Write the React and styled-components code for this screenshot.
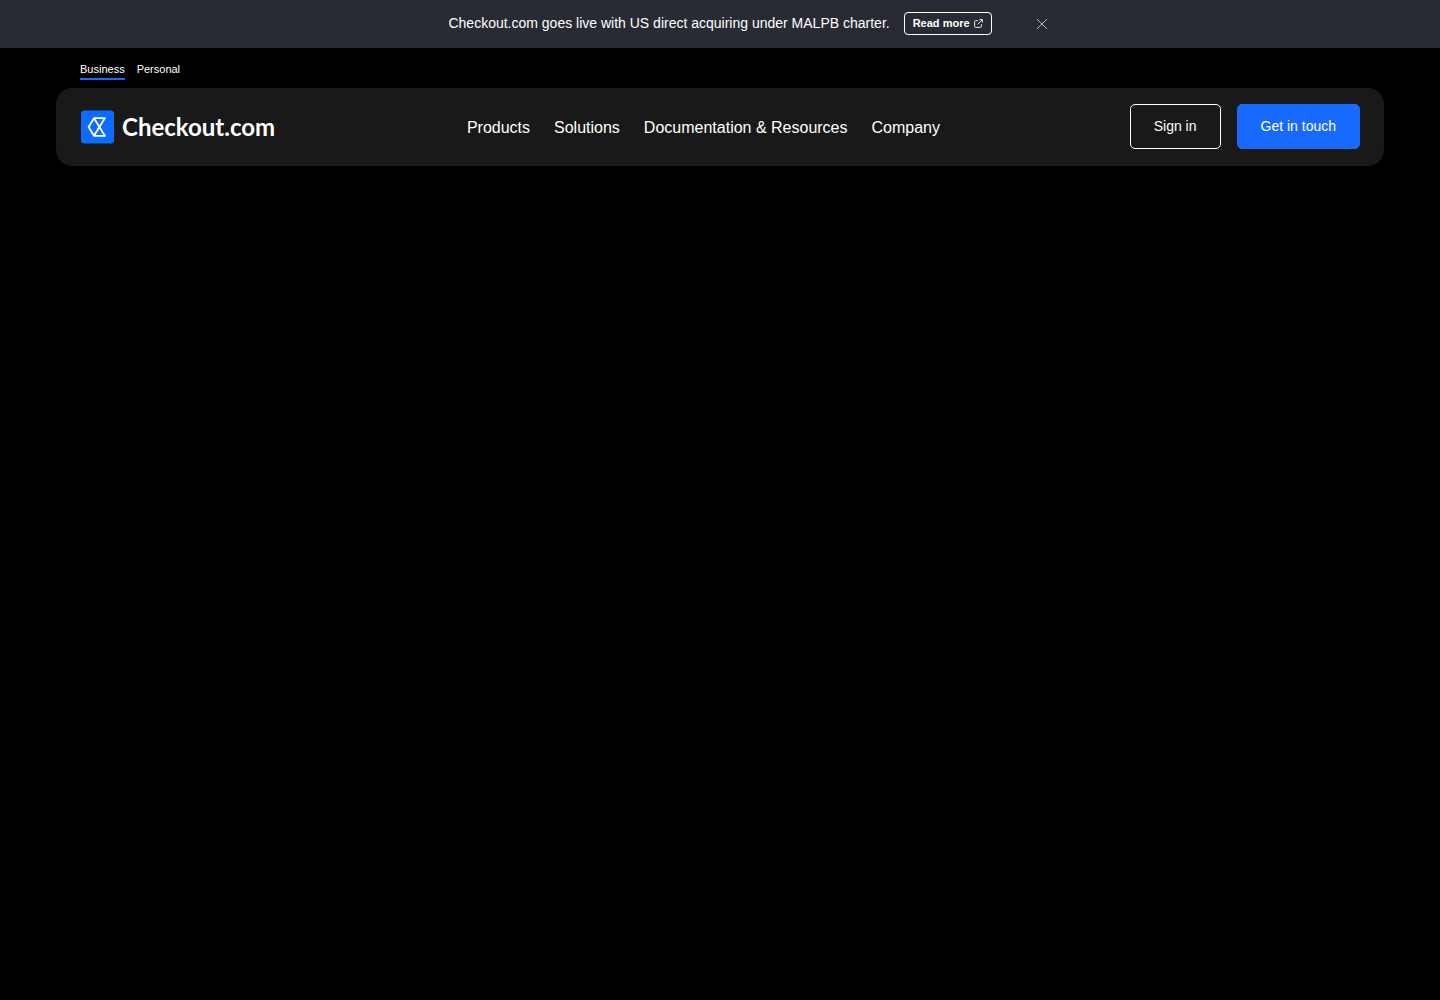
import React, {useState} from 'react'
import styled, {createGlobalStyle} from 'styled-components';

const GlobalStyle = createGlobalStyle`
  * {
    box-sizing: border-box;
  }

  body {
    margin: 0;
    background: #000;
    color: #fff;
    font-family: "Liberation Sans", Arial, sans-serif;
  }

  a {
    color: inherit;
    text-decoration: none;
  }

  button {
    font-family: inherit;
    cursor: pointer;
  }
`;

const Banner = styled.div`
  display: grid;
  grid-template-columns: 1fr auto 1fr;
  align-items: center;
  min-height: 48px;
  background: #282b33;
`;

const Message = styled.div`
  grid-column: 2;
  display: flex;
  align-items: center;
  gap: 14px;
  padding-bottom: 2px;
  font-size: 14px;
  line-height: 20px;
`;

const Text = styled.p`
  margin: 0;
`;

const ReadMore = styled.a`
  display: flex;
  align-items: center;
  gap: 4px;
  height: 23px;
  padding: 0 8px;
  border: 1px solid #fff;
  border-radius: 4px;
  font-size: 11px;
  font-weight: 700;
`;

const Close = styled.button`
  justify-self: start;
  display: flex;
  margin-left: 40px;
  padding: 4px;
  border: 0;
  background: none;
  color: #b4b6ba;
`;

const Header = styled.header`
  padding: 0 56px;
`;

const Audience = styled.nav`
  display: flex;
  gap: 12px;
  padding: 14px 24px 8px;
`;

const AudienceLink = styled.a`
  padding-bottom: 2px;
  border-bottom: 2px solid ${props => (props.$active ? '#186aff' : 'transparent')};
  font-size: 11px;
  line-height: 14px;
`;

const Bar = styled.div`
  display: flex;
  align-items: center;
  justify-content: space-between;
  min-height: 78px;
  padding: 16px 24px 17px;
  border-radius: 16px;
  background: #191919;
`;

const Logo = styled.a`
  display: flex;
  align-items: center;
  gap: 8px;
  padding-right: 2px;
`;

const Wordmark = styled.span`
  font-family: Lato, sans-serif;
  font-size: 24px;
  font-weight: 700;
  line-height: 34px;
`;

const Menu = styled.nav`
  display: flex;
  gap: 24px;
`;

const MenuItem = styled.button`
  padding: 2px 0 0;
  border: 0;
  background: none;
  color: #fff;
  font-size: 16px;
  line-height: 24px;
`;

const Actions = styled.div`
  display: flex;
  gap: 16px;
`;

const Action = styled.a`
  padding: 11px 23px;
  border: 1px solid ${props => (props.$primary ? '#186aff' : '#fff')};
  border-radius: 5px;
  background: ${props => (props.$primary ? '#186aff' : 'transparent')};
  font-size: 14px;
  line-height: 21px;
`;

const menu = ['Products', 'Solutions', 'Documentation & Resources', 'Company'];

const ExternalIcon = () => (
    <svg width="9" height="9" viewBox="0 0 10 10" fill="none" stroke="currentColor" strokeWidth="1" aria-hidden="true">
        <path d="M4.3 1.8H1.6Q.7 1.8.7 2.7V8.4Q.7 9.3 1.6 9.3H7.3Q8.2 9.3 8.2 8.4V5.7" />
        <path d="M6 .7H9.3V4M9.2.8L4 6" />
    </svg>
)

const CloseIcon = () => (
    <svg width="12" height="12" viewBox="0 0 12 12" fill="none" stroke="currentColor" strokeWidth="1" aria-hidden="true">
        <path d="M1 1L11 11M11 1L1 11" />
    </svg>
)

const LogoMark = () => (
    <svg width="34" height="34" viewBox="0 0 34 34" fill="none" aria-hidden="true">
        <rect x="1" y="0.5" width="33" height="33" rx="3.5" fill="#0b6cff" />
        <path
            d="M14 8.2H24.8L14 25.8H24.8L14 8.2L8.6 17L14 25.8"
            stroke="#fff"
            strokeWidth="1.8"
            strokeLinejoin="round"
        />
    </svg>
)

const App = () => {
    const [showBanner, setShowBanner] = useState(true);

    return (
        <>
          <GlobalStyle />
          {showBanner && (
              <Banner>
                  <Message>
                      <Text>Checkout.com goes live with US direct acquiring under MALPB charter.</Text>
                      <ReadMore href="#read-more">Read more <ExternalIcon /></ReadMore>
                  </Message>
                  <Close type="button" aria-label="Close" onClick={() => setShowBanner(false)}>
                      <CloseIcon />
                  </Close>
              </Banner>
          )}
          <Header>
              <Audience aria-label="Audience">
                  <AudienceLink href="#business" $active>Business</AudienceLink>
                  <AudienceLink href="#personal">Personal</AudienceLink>
              </Audience>
              <Bar>
                  <Logo href="#home">
                      <LogoMark />
                      <Wordmark>Checkout.com</Wordmark>
                  </Logo>
                  <Menu aria-label="Main">
                      {menu.map(item => <MenuItem type="button" key={item}>{item}</MenuItem>)}
                  </Menu>
                  <Actions>
                      <Action href="#sign-in">Sign in</Action>
                      <Action href="#contact" $primary>Get in touch</Action>
                  </Actions>
              </Bar>
          </Header>
        </>
    )
}

export default App;
